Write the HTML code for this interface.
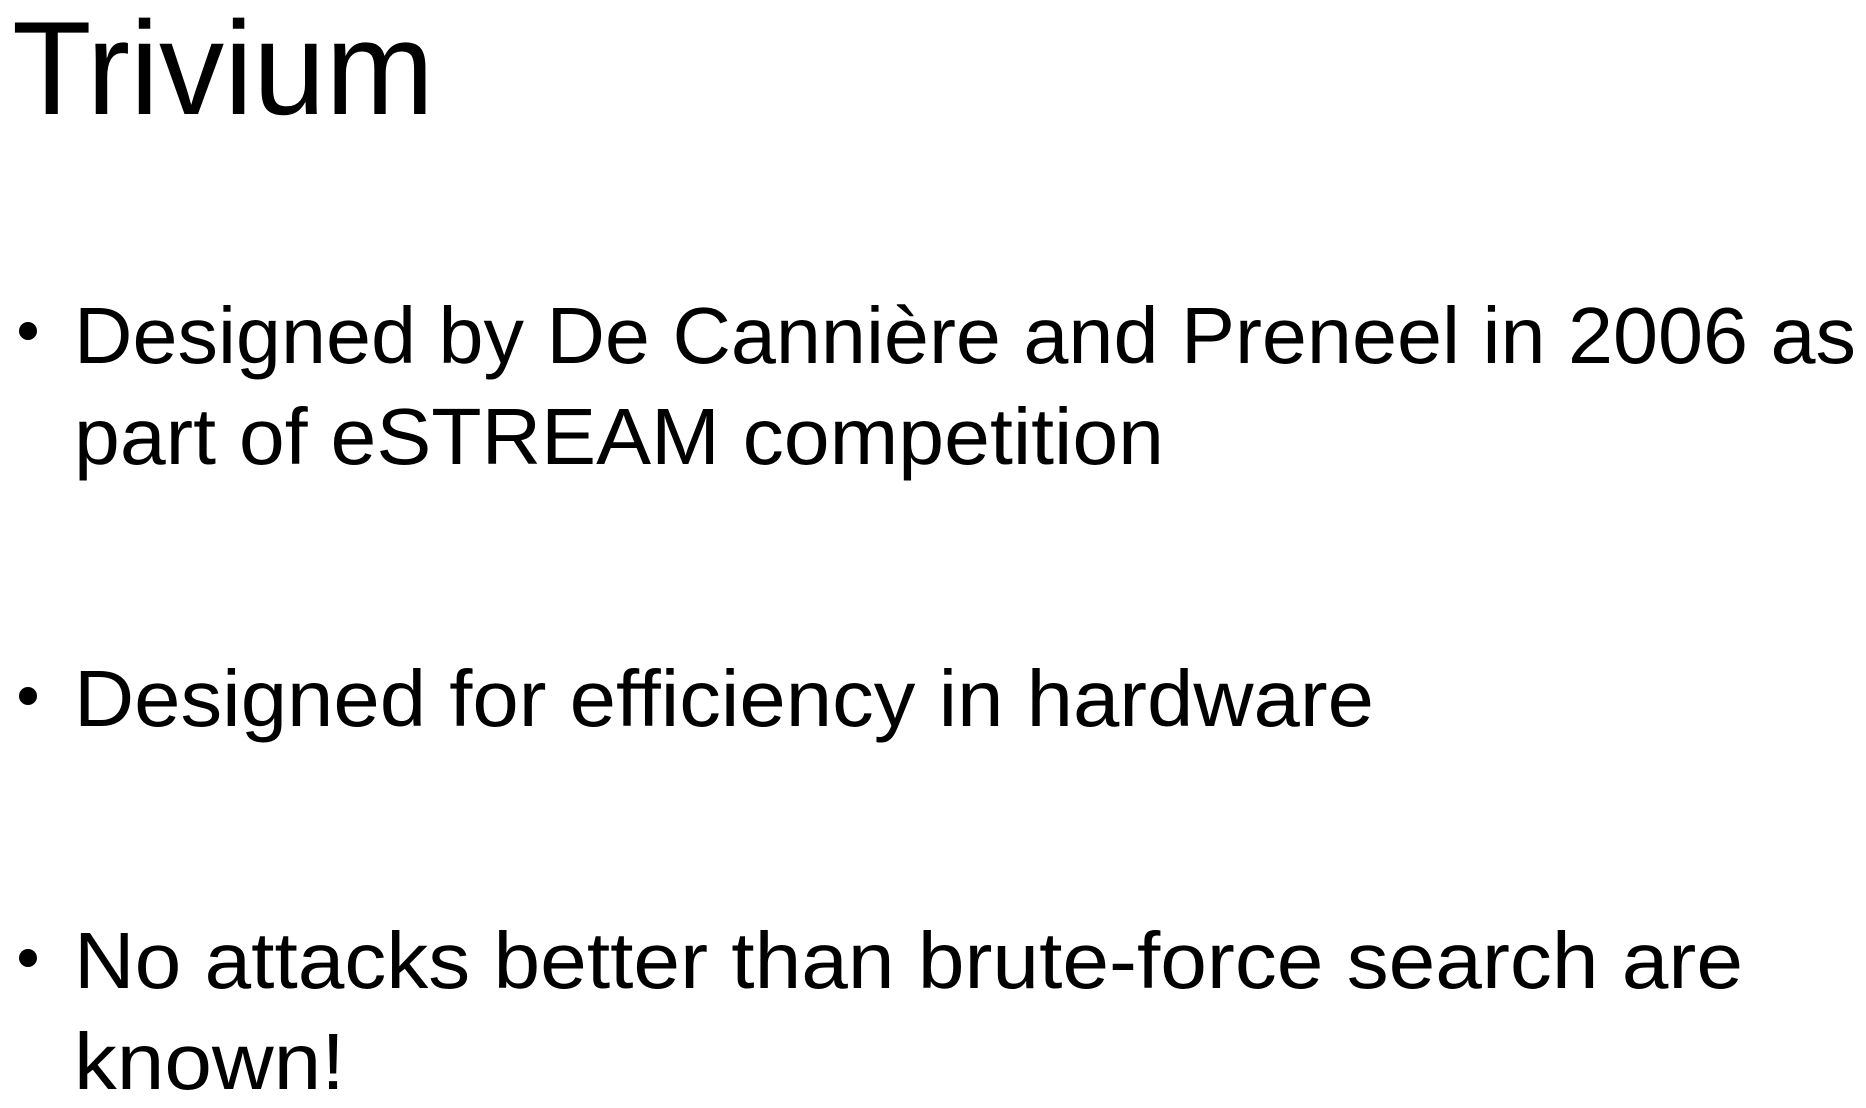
<!DOCTYPE html>
<html><head><meta charset="utf-8"><style>
html,body{margin:0;padding:0;background:#fff;width:1866px;height:1108px;overflow:hidden}
svg{display:block}
text{font-family:"Liberation Sans",sans-serif;fill:#000}
</style></head><body>
<svg width="1866" height="1108" viewBox="0 0 1866 1108">
<text x="12" y="114" font-size="133" textLength="422" lengthAdjust="spacingAndGlyphs" style="font-weight:300">Trivium</text>
<circle cx="28" cy="331" r="9"/>
<text x="74" y="363" font-size="80" textLength="1782" lengthAdjust="spacingAndGlyphs">Designed by De Cannière and Preneel in 2006 as</text>
<text x="74" y="464" font-size="80" textLength="1090" lengthAdjust="spacingAndGlyphs">part of eSTREAM competition</text>
<circle cx="28" cy="696" r="9"/>
<text x="74" y="726" font-size="80" textLength="1300" lengthAdjust="spacingAndGlyphs">Designed for efficiency in hardware</text>
<circle cx="28" cy="958" r="9"/>
<text x="74" y="988" font-size="80" textLength="1669" lengthAdjust="spacingAndGlyphs">No attacks better than brute-force search are</text>
<text x="74" y="1089" font-size="80" textLength="271" lengthAdjust="spacingAndGlyphs">known!</text>
</svg>
</body></html>
